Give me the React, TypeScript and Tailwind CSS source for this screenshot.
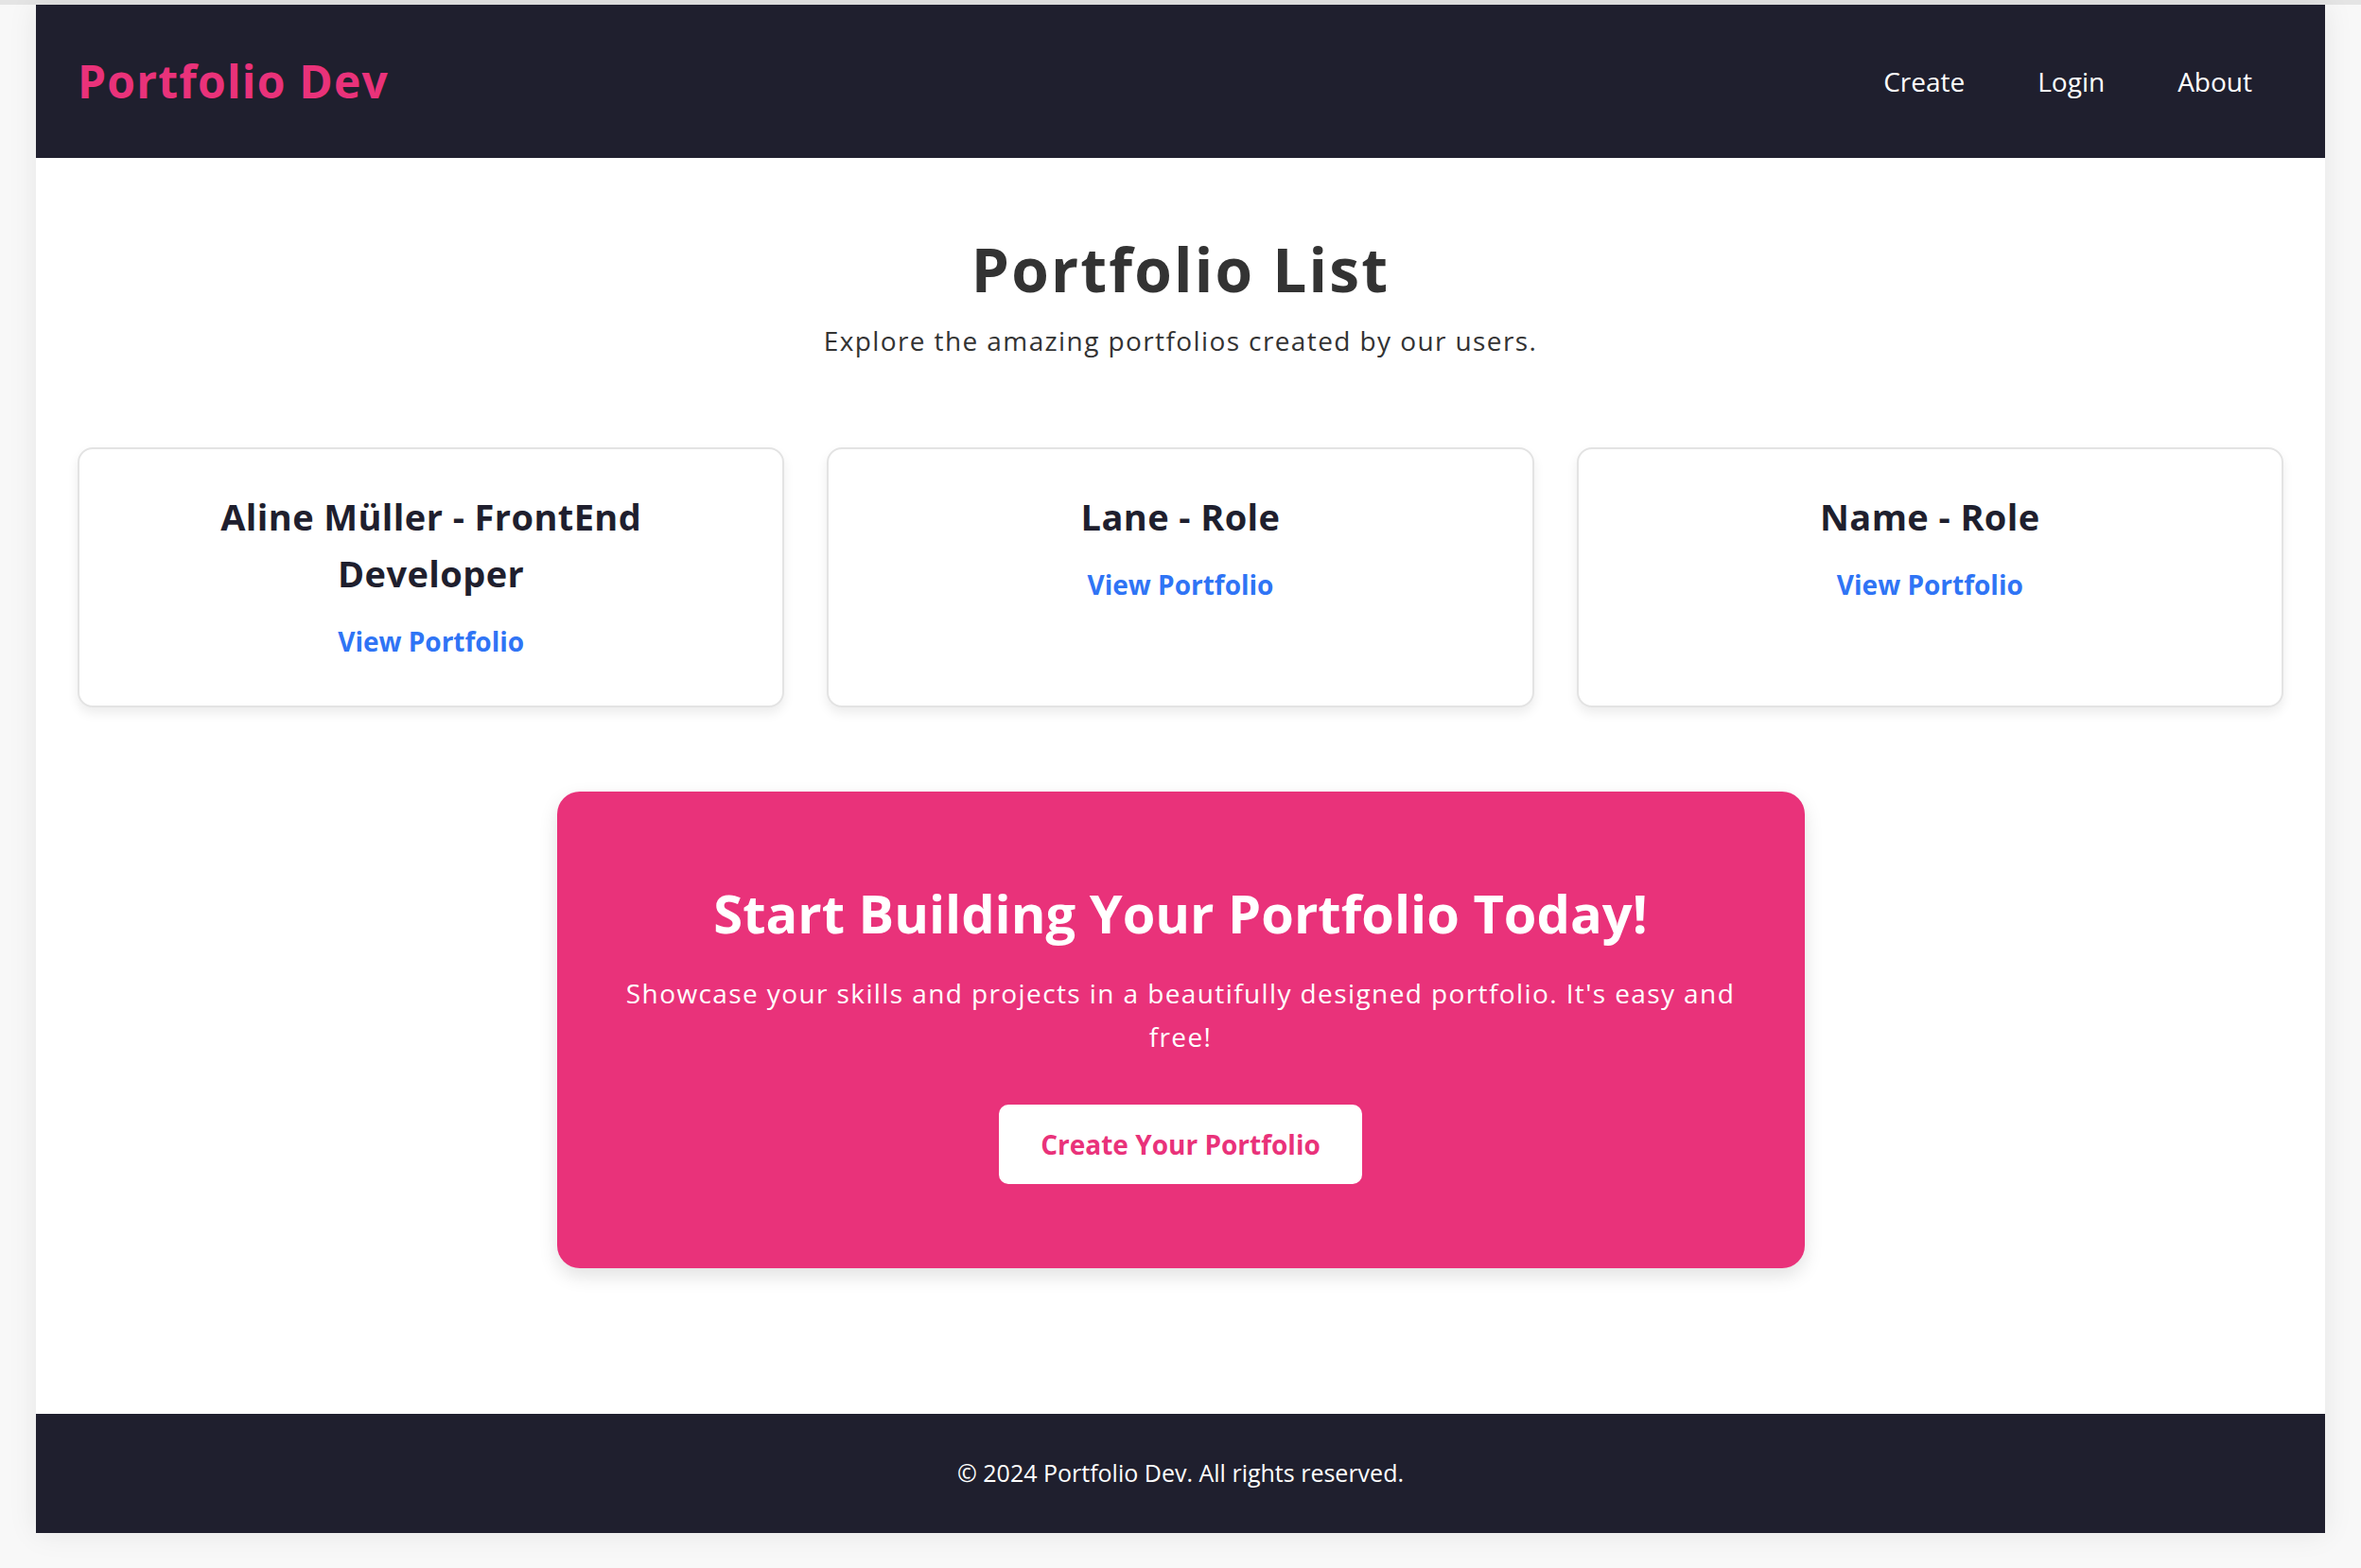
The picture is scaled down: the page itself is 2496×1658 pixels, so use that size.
const portfolios = [
  { name: 'Aline Müller', role: 'FrontEnd Developer' },
  { name: 'Lane', role: 'Role' },
  { name: 'Name', role: 'Role' },
]

function Header() {
  return (
    <header className="flex h-[162px] items-center justify-between bg-[#1f1f2e] pl-[44px] pr-[77px]">
      <h1 className="text-[48px] font-bold leading-none tracking-[1.2px] text-[#e9327a]">Portfolio Dev</h1>
      <nav className="flex items-center gap-[77px] text-[28px] text-white">
        <a href="#">Create</a>
        <a href="#">Login</a>
        <a href="#">About</a>
      </nav>
    </header>
  )
}

function PortfolioCard({ name, role }: { name: string; role: string }) {
  return (
    <div className="flex flex-col items-center rounded-[16px] border-2 border-[#e3e3e3] bg-white px-[60px] pb-[45px] pt-[41px] text-center shadow-[0_6px_12px_rgba(0,0,0,0.08)]">
      <h3 className="text-[38px] font-bold leading-[60px] tracking-[0.4px] text-[#1f1f2e]">
        {name} - {role}
      </h3>
      <a href="#" className="mt-[20px] text-[28px] font-bold leading-[45px] text-[#2f74f5]">
        View Portfolio
      </a>
    </div>
  )
}

function App() {
  return (
    <div className="min-h-screen border-t-[5px] border-[#e4e4e4] bg-[#f8f8f8] font-['Open_Sans',sans-serif]">
      <div className="mx-auto w-[2420px] bg-white shadow-[0_0_30px_rgba(0,0,0,0.08)]">
        <Header />
        <main className="px-[44px] pb-[154px] pt-[79px]">
          <section className="text-center text-[#333]">
            <h2 className="text-[64px] font-bold leading-[77px] tracking-[2.2px]">Portfolio List</h2>
            <p className="mt-[15px] text-[28px] leading-[45px] tracking-[1.4px]">
              Explore the amazing portfolios created by our users.
            </p>
          </section>

          <div className="mt-[90px] grid grid-cols-3 gap-[45px]">
            {portfolios.map((p) => (
              <PortfolioCard key={p.name} name={p.name} role={p.role} />
            ))}
          </div>

          <section className="mx-auto mt-[89px] flex w-[1319px] flex-col items-center rounded-[24px] bg-[#e9327a] px-[64px] pb-[89px] pt-[95px] text-center text-white shadow-[0_8px_20px_rgba(0,0,0,0.12)]">
            <h2 className="text-[56px] font-bold leading-[67px]">Start Building Your Portfolio Today!</h2>
            <p className="mt-[28px] text-[28px] leading-[46px] tracking-[1.4px]">
              Showcase your skills and projects in a beautifully designed portfolio. It's easy and free!
            </p>
            <a
              href="#"
              className="mt-[49px] rounded-[10px] bg-white px-[44px] py-[24px] text-[28px] font-bold leading-[36px] text-[#e9327a]"
            >
              Create Your Portfolio
            </a>
          </section>
        </main>
        <footer className="flex h-[126px] items-center justify-center bg-[#1f1f2e] text-[25px] text-white">
          © 2024 Portfolio Dev. All rights reserved.
        </footer>
      </div>
    </div>
  )
}

export default App
